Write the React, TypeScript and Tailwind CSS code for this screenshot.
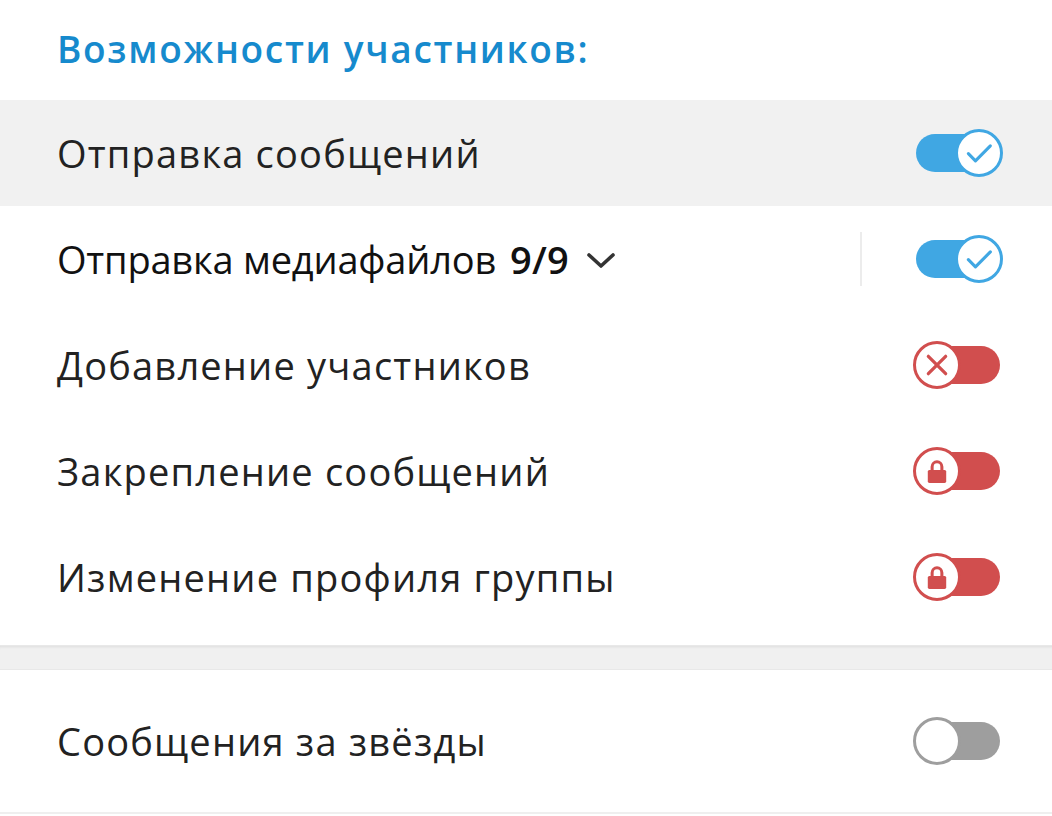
type Kind = "on" | "off" | "locked" | "plain";

function Toggle({ kind }: { kind: Kind }) {
    if (kind === "on") {
        return (
            <div className="relative w-[87px] h-[48px] flex items-center ml-[3px] -mr-[3px]">
                <div className="w-[84px] h-[38px] rounded-full bg-[#40a7e3]" />
                <div className="absolute right-0 top-0 size-[48px] rounded-full border-[3px] border-[#40a7e3] bg-white flex items-center justify-center">
                    <svg width="34" height="34" viewBox="0 0 24 24" fill="none" stroke="#40a7e3" strokeWidth="2.2" strokeLinecap="round" strokeLinejoin="round">
                        <path d="M4.5 12.5l5 5L20 7" />
                    </svg>
                </div>
            </div>
        );
    }
    const color = kind === "plain" ? "#9e9e9e" : "#d14e4e";
    return (
        <div className="relative w-[87px] h-[48px] flex items-center justify-end">
            <div className="w-[84px] h-[38px] rounded-full" style={{ backgroundColor: color }} />
            <div
                className="absolute left-0 top-0 size-[48px] rounded-full border-[3px] bg-white flex items-center justify-center"
                style={{ borderColor: color }}
            >
                {kind === "off" && (
                    <svg width="26" height="26" viewBox="0 0 24 24" fill="none" stroke={color} strokeWidth="3" strokeLinecap="round">
                        <path d="M4 4l16 16M20 4L4 20" />
                    </svg>
                )}
                {kind === "locked" && (
                    <svg width="26" height="26" viewBox="0 0 24 24" fill="none">
                        <path d="M7.5 11V8a4.5 4.5 0 0 1 9 0v3" stroke={color} strokeWidth="2.8" />
                        <rect x="3.5" y="11" width="17" height="12" rx="1.5" fill={color} />
                    </svg>
                )}
            </div>
        </div>
    );
}

function Row({ label, kind, active, extra }: { label: string; kind: Kind; active?: boolean; extra?: boolean }) {
    return (
        <div className={`h-[106px] flex items-center pl-[57px] pr-[52px] ${active ? "bg-[#f1f1f1]" : "bg-white"}`}>
            {extra ? (
                <div className="flex-1 flex items-center text-[38px] text-[#111]">
                    <span className="tracking-[-0.2px]">{label}</span>
                    <span className="ml-[14px] font-semibold tracking-[0.2px]">9/9</span>
                    <svg width="32" height="20" viewBox="0 0 32 20" fill="none" stroke="#333" strokeWidth="3.6" strokeLinecap="round" strokeLinejoin="round" className="ml-[16px] mt-[2px]">
                        <path d="M4 5l12 11L28 5" />
                    </svg>
                </div>
            ) : (
                <div className="flex-1 text-[38px] tracking-[1.2px] text-[#222]">{label}</div>
            )}
            {extra && <div className="w-[2px] h-[54px] bg-[#ececec] mr-[51px]" />}
            <Toggle kind={kind} />
        </div>
    );
}

export default function App() {
    return (
        <div className="w-[1052px] h-[816px] bg-white overflow-hidden" style={{ fontFamily: '"Open Sans", "Noto Sans", sans-serif' }}>
            <div className="h-[100px] flex items-center pl-[57px] pb-[2px]">
                <h2 className="text-[37px] tracking-[1.7px] font-semibold text-[#168acd]">Возможности участников:</h2>
            </div>
            <Row label="Отправка сообщений" kind="on" active />
            <Row label="Отправка медиафайлов" kind="on" extra />
            <Row label="Добавление участников" kind="off" />
            <Row label="Закрепление сообщений" kind="locked" />
            <Row label="Изменение профиля группы" kind="locked" />
            <div className="h-[15px] bg-white" />
            <div className="h-[25px] bg-[#f0f0f0] border-y border-[#e8e8e8] shadow-[inset_0_3px_3px_-2px_rgba(0,0,0,0.08)]" />
            <div className="h-[144px] flex items-center pl-[57px] pr-[52px] border-b-2 border-[#efefef]">
                <span className="flex-1 text-[38px] tracking-[1.2px] text-[#222]">Сообщения за звёзды</span>
                <Toggle kind="plain" />
            </div>
        </div>
    );
}
